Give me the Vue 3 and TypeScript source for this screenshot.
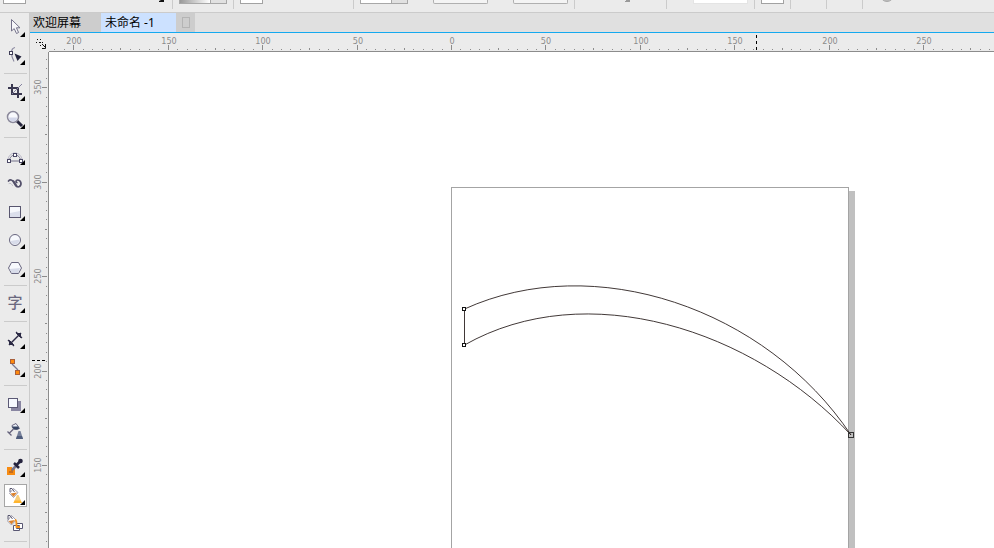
<script setup lang="ts">
import { computed, onBeforeUnmount, onMounted, ref } from 'vue'

interface Tool {
  id: string
  label: string
  flyout: boolean
}

interface Tick {
  pos: number
  size: number
  label: string
}

const toolGroups: Tool[][] = [
  [
    { id: 'pick', label: 'Pick', flyout: true },
    { id: 'shape', label: 'Shape', flyout: true },
  ],
  [
    { id: 'crop', label: 'Crop', flyout: true },
    { id: 'zoom', label: 'Zoom', flyout: true },
  ],
  [
    { id: 'curve', label: 'Curve', flyout: true },
    { id: 'artistic', label: 'Artistic media', flyout: false },
    { id: 'rectangle', label: 'Rectangle', flyout: true },
    { id: 'ellipse', label: 'Ellipse', flyout: true },
    { id: 'polygon', label: 'Polygon', flyout: true },
  ],
  [{ id: 'text', label: 'Text', flyout: true }],
  [
    { id: 'dimension', label: 'Dimension', flyout: true },
    { id: 'connector', label: 'Connector', flyout: true },
  ],
  [
    { id: 'shadow', label: 'Drop shadow', flyout: true },
    { id: 'transparency', label: 'Transparency', flyout: false },
  ],
  [
    { id: 'eyedropper', label: 'Color eyedropper', flyout: true },
    { id: 'fill', label: 'Interactive fill', flyout: true },
    { id: 'smart', label: 'Smart fill', flyout: false },
  ],
]

const activeTool = ref('fill')
const activeTab = ref(1)
const tabs = ['欢迎屏幕', '未命名 -1']

// Pixels per millimetre at the current zoom level
const scale = 1.889

// Room that a label needs on either side of its tick
const labelRoom = 10

function buildTicks(origin: number, direction: number, length: number): Tick[] {
  const ticks: Tick[] = []
  for (let unit = -1000; unit <= 2000; unit += 5) {
    const pos = Math.round(origin + direction * unit * scale)
    if (pos < 0 || pos > length) continue
    const major = unit % 50 === 0
    const fits = pos > labelRoom && pos < length - labelRoom
    ticks.push({
      pos,
      size: major ? 5 : unit % 25 === 0 ? 2 : 1,
      label: major && fits ? String(Math.abs(unit)) : '',
    })
  }
  return ticks
}

const documentArea = ref<HTMLElement | null>(null)
const areaWidth = ref(0)
const areaHeight = ref(0)

function measure() {
  if (!documentArea.value) return
  areaWidth.value = documentArea.value.clientWidth - 19
  areaHeight.value = documentArea.value.clientHeight - 19
}

onMounted(() => {
  measure()
  window.addEventListener('resize', measure)
})
onBeforeUnmount(() => window.removeEventListener('resize', measure))

const columnTicks = computed(() => buildTicks(402, 1, areaWidth.value))
const rowTicks = computed(() => buildTicks(696.4, -1, areaHeight.value))
</script>

<template>
  <div class="app">
    <header class="property-bar">
      <div class="group ends first">
        <input class="field small" aria-label="Preset" />
        <svg width="6" height="3"><path d="M2 0H5V2H0V1Z" fill="#111" /></svg>
      </div>
      <div class="group second">
        <button class="combo" aria-label="Gradient"><span class="swatch"></span></button>
      </div>
      <div class="group third"><input class="field small" aria-label="Color" /></div>
      <div class="group ends fourth">
        <button class="combo" aria-label="Opacity"><span></span></button>
        <input class="field soft" aria-label="Position X" />
        <input class="field soft" aria-label="Position Y" />
      </div>
      <div class="group fifth">
        <svg width="6" height="3"><path d="M1 0H5V2H0V1H1Z" fill="#999" /></svg>
      </div>
      <div class="group sixth"><input class="field plain" aria-label="Steps" /></div>
      <div class="group seventh"><input class="field small" aria-label="Copy" /></div>
      <div class="group seventh"></div>
      <div class="group seventh"></div>
      <div class="group last">
        <svg width="12" height="3"><circle cx="6" cy="-5" r="6.500" fill="#bbb" stroke="#aaa" /></svg>
      </div>
    </header>

    <div class="body">
      <nav class="toolbox" aria-label="Toolbox">
        <div v-for="(group, g) in toolGroups" :key="g" class="tool-group">
          <button
            v-for="tool in group"
            :key="tool.id"
            class="tool"
            :class="{ active: tool.id === activeTool }"
            :aria-label="tool.label"
            @click="activeTool = tool.id"
          >
            <svg class="icon" width="23" height="23" viewBox="0 0 23 23" fill="none">
              <g v-if="tool.id === 'pick'">
                <path d="M7.500 3.500V15L10.200 12.600L12.500 17.500L14.600 16.500L12.400 11.800H16Z" fill="#f6f6f9" stroke="#74728a" />
              </g>
              <g v-else-if="tool.id === 'shape'">
                <path d="M11 3.500C8.500 4 7.500 6 7.500 8.500C7.500 12 8.500 15 10 17.500" stroke="#8b89a0" stroke-width="1.200" />
                <path d="M10.500 9.500L17.500 12.500L13.500 17Z" fill="#24243c" />
                <rect x="5.500" y="7.500" width="3" height="3" fill="#fff" stroke="#3f3d57" />
              </g>
              <g v-else-if="tool.id === 'crop'" stroke="#3a3850">
                <path d="M8 4V14H18" stroke-width="2" />
                <path d="M4 8H14V18" stroke-width="2" />
                <path d="M8 14L18 4" stroke="#8683a0" />
              </g>
              <g v-else-if="tool.id === 'zoom'">
                <path d="M13 13L18 18" stroke="#26263e" stroke-width="3" />
                <circle cx="9" cy="9" r="5.500" fill="#f8f9fd" stroke="#8b899b" stroke-width="1.500" />
                <path d="M5 9.500H13A4 4 0 0 1 5 9.500" fill="#d3d7ea" />
              </g>
              <g v-else-if="tool.id === 'curve'" stroke="#74728a">
                <path d="M4 15C5 11 8 9 11 9C14 9 17 11 18 15" stroke="#b5b3c4" />
                <path d="M5 17C6 13 8 11 11 11C14 11 16 13 17 17M5 17H17" />
                <g fill="#fff" stroke="#4a4866">
                  <rect x="3.500" y="15.500" width="3" height="3" />
                  <rect x="9.500" y="9.500" width="3" height="3" />
                  <rect x="15.500" y="15.500" width="3" height="3" />
                </g>
              </g>
              <g v-else-if="tool.id === 'artistic'" stroke="#54516b" stroke-linecap="round">
                <path d="M4.500 9C6 7.300 8.500 7.500 10 10.500C11.500 14.500 13.500 15.500 15.500 14.500C18.200 12.500 17 8 13.500 8C11.800 8 11.500 10 12.800 10.500" stroke-width="1.700" />
                <path d="M9.500 9.500L12.500 14" stroke-width="2.200" />
                <path d="M5 11.500C6.500 10.500 7.500 12 8.500 13.500" stroke="#b0aebd" stroke-width="0.800" />
              </g>
              <g v-else-if="tool.id === 'rectangle'">
                <rect x="5.500" y="6.500" width="11" height="11" fill="#f6f8fc" stroke="#58566f" />
                <path d="M6 13L16 11V17H6Z" fill="#dbdfec" />
              </g>
              <g v-else-if="tool.id === 'ellipse'">
                <circle cx="11" cy="12" r="5.500" fill="#f7f9fd" stroke="#67657e" />
                <path d="M6.500 13L15.500 11.500A4.600 4.600 0 0 1 6.500 13" fill="#d8dcea" />
              </g>
              <g v-else-if="tool.id === 'polygon'">
                <path d="M4.500 12L7.500 6.500H14.500L17.500 12L14.500 17.500H7.500Z" fill="#f7f9fd" stroke="#67657e" />
                <path d="M5.500 13L16 12L14 17H8Z" fill="#d8dcea" />
              </g>
              <text v-else-if="tool.id === 'text'" class="glyph" x="11" y="16" text-anchor="middle">字</text>
              <g v-else-if="tool.id === 'dimension'" stroke="#2b2944">
                <path d="M5 17L17 5" stroke-width="1.500" />
                <path d="M4 12L10 18M12 4L18 10" stroke-width="1.200" />
                <path d="M5.500 16.500V12.500L9.500 16.500ZM16.500 5.500V9.500L12.500 5.500Z" fill="#2b2944" />
              </g>
              <g v-else-if="tool.id === 'connector'">
                <path d="M8 8L14 14" stroke="#7b7990" stroke-width="1.300" />
                <g fill="#ff8a0c" stroke="#a8603c">
                  <rect x="6.500" y="3.500" width="4" height="4" />
                  <rect x="11.500" y="14.500" width="4" height="4" />
                </g>
              </g>
              <g v-else-if="tool.id === 'shadow'">
                <path d="M7 9H17V19H7Z" fill="#8986a2" />
                <rect x="4.500" y="6.500" width="9" height="9" fill="#f6f8fe" stroke="#5b5975" />
              </g>
              <g v-else-if="tool.id === 'transparency'">
                <path d="M8 5.500C8 8 9.500 9.500 11.500 9.300C13.500 9.200 15 8.500 15.500 8.500L12 3.500Z" fill="#eef2fa" stroke="#67657e" />
                <path d="M8 6.500H14.500L15 8.700C13 10.500 9 10 8 6.500Z" fill="#354463" />
                <path d="M9.500 9L5.500 13M3.500 11.500L7.500 15.500" stroke="#67657e" stroke-width="1.300" />
                <path d="M14.500 11H16.500L19 19H12Z" fill="#76809a" />
                <path d="M13 16H18L19 19H12Z" fill="#4f5d7c" />
              </g>
              <g v-else-if="tool.id === 'eyedropper'">
                <path d="M3 11H8V13H11V19H3Z" fill="#f78b12" />
                <path d="M5 15H7V13H9V17H5Z" fill="#c46d1c" />
                <path d="M8 14L13 9" stroke="#77758c" stroke-width="2.500" />
                <path d="M10 7L15 12M13 8.500L17 4.500" stroke="#25233d" stroke-width="2.500" />
                <circle cx="16.500" cy="5" r="2.300" fill="#25233d" />
              </g>
              <g v-else-if="tool.id === 'fill'">
                <path d="M9.500 4.500L14 8.500L9.500 13.500L5.500 9.500Z" fill="#fff" stroke="#8a889c" stroke-width="0.800" />
                <path d="M6.500 9.500L13 8.500L9.500 12.800Z" fill="#dc812a" />
                <path d="M6 8V4.500H8L10.500 8" stroke="#4b4964" stroke-width="0.900" />
                <path d="M13 11H14.500L18 19H9.500Z" fill="#f9cd78" />
                <path d="M10.500 16.500H16.500L18 19H9.500Z" fill="#ffb52e" />
              </g>
              <g v-else>
                <path d="M7.500 3.500L12 8L7.500 13L3.500 9Z" fill="#fff" stroke="#8a889c" stroke-width="0.800" />
                <path d="M4.500 9L11 8L7.500 12.300Z" fill="#dc812a" />
                <path d="M4 7.500V3.500H6L8.500 7" stroke="#4b4964" stroke-width="0.900" />
                <path d="M9.500 13.500H15.500V18.500H9.500ZM12.500 11.500H18.500V16.500H12.500Z" fill="#fff" stroke="#595773" />
                <path d="M11 7.500C12.500 8 12.500 10 12.500 15H16" stroke="#f39019" stroke-width="1.800" />
              </g>
              <path v-if="tool.flyout" d="M21 16V21H16Z" fill="#000" />
            </svg>
          </button>
        </div>
      </nav>

      <main class="workspace">
        <div class="tabs" role="tablist">
          <button
            v-for="(tab, i) in tabs"
            :key="tab"
            class="tab"
            :class="{ current: i === activeTab }"
            role="tab"
            :aria-selected="i === activeTab"
            @click="activeTab = i"
          >
            {{ tab }}
          </button>
          <button class="new-tab" aria-label="New document"><span></span></button>
        </div>

        <div ref="documentArea" class="document">
          <svg width="19" height="19" stroke="#111">
            <path d="M10.500 6V15M6 9.500H15" stroke-dasharray="1 2" />
            <path d="M7 6L8 7M12 11L15 14" />
            <path d="M15.500 11V15.500H12" fill="none" />
          </svg>

          <svg class="ruler columns">
            <g v-for="tick in columnTicks" :key="tick.pos">
              <rect :x="tick.pos" :y="17 - tick.size" width="1" :height="tick.size" />
              <text v-if="tick.label" :x="tick.pos + 1" y="11" text-anchor="middle">{{ tick.label }}</text>
            </g>
            <path class="cursor" d="M707.500 2V17" stroke-dasharray="3 3" />
          </svg>

          <svg class="ruler rows">
            <g v-for="tick in rowTicks" :key="tick.pos">
              <rect :x="17 - tick.size" :y="tick.pos" :width="tick.size" height="1" />
              <text
                v-if="tick.label"
                :transform="`translate(11 ${tick.pos}) rotate(-90)`"
                text-anchor="middle"
              >{{ tick.label }}</text>
            </g>
            <path class="cursor" d="M2 308.500H17" stroke-dasharray="3 2" />
          </svg>

          <svg class="canvas" fill="none">
            <rect x="800" y="139" width="6" height="561" fill="#c0c0c0" />
            <rect x="402.500" y="135.500" width="397" height="561" fill="#fff" stroke="#a4a4a4" />
            <path
              d="M415.500 257C545 198 717 256 802 383C704 277 537 224 415.500 293Z"
              stroke="#2b2120"
              stroke-width="0.900"
            />
            <g stroke="#111">
              <rect x="413.500" y="255.500" width="3" height="3" fill="#fff" />
              <rect x="413.500" y="291.500" width="3" height="3" fill="#fff" />
              <rect x="799.500" y="380.500" width="5" height="5" stroke="#333" />
            </g>
          </svg>
        </div>
      </main>
    </div>
  </div>
</template>

<style>
body {
  overflow: hidden;
}
</style>

<style scoped>
.app {
  display: flex;
  flex-direction: column;
  height: 100vh;
  background: #ebebeb;
  color: #000;
  font-family: "Noto Sans", "Noto Sans CJK SC", sans-serif;
  font-size: 12px;
}

.app *,
.app {
  box-sizing: border-box;
}

button,
input {
  margin: 0;
  padding: 0;
  border: 0;
  border-radius: 0;
  background: none;
  font: inherit;
  color: inherit;
}

svg {
  display: block;
}

/* Property bar */
.property-bar {
  display: flex;
  flex: none;
  height: 13px;
  border-bottom: 1px solid #cbcbcb;
  overflow: hidden;
}

.group {
  display: flex;
  flex: none;
  align-items: flex-start;
  height: 9px;
  padding: 0 6px;
  border-right: 1px solid #cbcbcb;
}

.ends {
  justify-content: space-between;
}

.first {
  width: 173px;
  padding: 0 7px 0 3px;
}

.second {
  width: 61px;
}

.third {
  width: 120px;
}

.fourth {
  width: 221px;
}

.fifth {
  width: 92px;
  justify-content: flex-end;
  padding-right: 35px;
}

.sixth {
  width: 88px;
  justify-content: flex-end;
}

.seventh {
  width: 36px;
}

.last {
  flex: 1;
  padding-left: 18px;
  border-right: 0;
}

.field {
  height: 4px;
  border: 1px solid #a2a2a2;
  border-top: 0;
  background: #fff;
}

.small {
  width: 23px;
}

.soft {
  width: 55px;
  border-color: #b0b0b0;
  border-radius: 0 0 2px 2px;
  background: #f4f4f4;
}

.plain {
  width: 55px;
  border-color: #e4e4e4;
}

.combo {
  width: 48px;
  height: 4px;
  border: 1px solid #a8a8a8;
  border-top: 0;
  background: #e1e1e1;
}

.combo span {
  display: block;
  width: 31px;
  height: 3px;
  border-right: 1px solid #a8a8a8;
  background: #fff;
}

.combo .swatch {
  background: linear-gradient(90deg, #999, #fff);
}

/* Toolbox */
.body {
  display: flex;
  flex: 1;
  min-height: 0;
}

.toolbox {
  flex: none;
  width: 30px;
  padding: 3px 2px 0 4px;
  border-right: 1px solid #cbcbcb;
  overflow: hidden;
}

.tool-group {
  display: flex;
  flex-direction: column;
  gap: 5px;
  margin-bottom: 6px;
  padding-bottom: 6px;
  border-bottom: 1px solid #cbcbcb;
}

.tool {
  display: block;
  width: 23px;
  height: 23px;
}

.tool.active {
  background: #fff;
  box-shadow: inset 0 0 0 1px #a6a6a6;
}

.icon {
  overflow: visible;
}

.glyph {
  fill: #6b697f;
  font-family: "Noto Sans CJK SC", sans-serif;
  font-size: 15px;
  font-weight: 500;
}

/* Workspace */
.workspace {
  display: flex;
  flex: 1;
  flex-direction: column;
  min-width: 0;
}

.tabs {
  display: flex;
  flex: none;
  height: 20px;
  border-bottom: 1px solid #14a9ef;
  background: #e0e0e0;
}

.tab {
  width: 71px;
  padding-left: 3px;
  background: #cdcdcd;
  line-height: 18px;
  text-align: left;
  white-space: nowrap;
}

.tab.current {
  width: 75px;
  padding-left: 4px;
  background: #cce1ff;
}

.new-tab {
  display: grid;
  place-items: center;
  width: 19px;
  background: #cdcdcd;
}

.new-tab span {
  width: 8px;
  height: 11px;
  border: 1px solid #b4b4b4;
}

.document {
  display: grid;
  flex: 1;
  grid-template-columns: 19px minmax(0, 1fr);
  grid-template-rows: 19px minmax(0, 1fr);
  min-height: 0;
}

.ruler {
  width: 100%;
  height: 100%;
  overflow: hidden;
  fill: #8c8c8c;
  font-family: "DejaVu Sans Condensed", "DejaVu Sans", sans-serif;
  font-size: 9px;
}

.columns {
  border-bottom: 1px solid #8c8c8c;
}

.rows {
  border-right: 1px solid #8c8c8c;
}

.cursor {
  fill: none;
  stroke: #000;
}

.canvas {
  width: 100%;
  height: 100%;
  background: #fff;
}
</style>
